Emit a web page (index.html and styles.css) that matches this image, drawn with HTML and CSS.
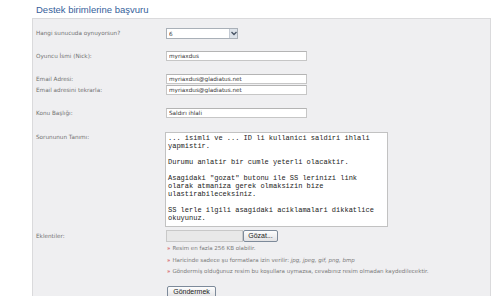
FILE: index.html
```html
<!DOCTYPE html>
<html lang="tr">
<head>
    <meta charset="UTF-8">
    <title>Destek birimlerine başvuru</title>
    <link rel="stylesheet" href="styles.css">
</head>
<body>
<h1 class="title">Destek birimlerine başvuru</h1>
<div class="panel">
    <div class="row r-server">
        <label class="lbl">Hangi sunucuda oynuyorsun?</label>
        <div class="select">
            <select><option>6</option></select>
            <span class="arrow"><svg width="6" height="5" viewBox="0 0 6 5"><path d="M0.5 1 L3 3.5 L5.5 1" fill="none" stroke="#4a5566" stroke-width="1.4"/></svg></span>
        </div>
    </div>
    <div class="row r-nick">
        <label class="lbl">Oyuncu İsmi (Nick):</label>
        <input class="txt" type="text" value="myriaxdus">
    </div>
    <div class="row r-mail">
        <label class="lbl">Email Adresi:</label>
        <input class="txt" type="text" value="myriaxdus@gladiatus.net">
    </div>
    <div class="row r-mail2">
        <label class="lbl">Email adresini tekrarla:</label>
        <input class="txt" type="text" value="myriaxdus@gladiatus.net">
    </div>
    <div class="row r-subject">
        <label class="lbl">Konu Başlığı:</label>
        <input class="txt" type="text" value="Saldırı ihlali">
    </div>
    <div class="row r-desc">
        <label class="lbl top">Sorununun Tanımı:</label>
        <textarea class="area">... isimli ve ... ID li kullanici saldiri ihlali
yapmistir.

Durumu anlatir bir cumle yeterli olacaktir.

Asagidaki "gozat" butonu ile SS lerinizi link
olarak atmaniza gerek olmaksizin bize
ulastirabileceksiniz.

SS lerle ilgili asagidaki aciklamalari dikkatlice
okuyunuz.</textarea>
    </div>
    <div class="row r-file">
        <label class="lbl">Eklentiler:</label>
        <div class="file">
            <span class="file-field"></span>
            <button class="btn browse" type="button">Gözat...</button>
        </div>
    </div>
    <ul class="notes">
        <li><span>»</span>Resim en fazla 256 KB olabilir.</li>
        <li><span>»</span>Haricinde sadece şu formatlara izin verilir: <em>jpg, jpeg, gif, png, bmp</em></li>
        <li><span>»</span>Göndermiş olduğunuz resim bu koşullara uymazsa, cevabınız resim olmadan kaydedilecektir.</li>
    </ul>
    <div class="submit">
        <button class="btn send" type="button">Göndermek</button>
    </div>
</div>
</body>
</html>
```

FILE: styles.css
```css
* {
    margin: 0;
    padding: 0;
    box-sizing: border-box;
}

html, body {
    height: 100%;
    overflow: hidden;
}

body {
    background: #fff;
    font-family: "DejaVu Sans", Verdana, sans-serif;
}

.title {
    height: 18px;
    padding: 4px 0 0 36px;
    font: normal 9.5px/11px "Liberation Sans", Arial, sans-serif;
    color: #36619b;
}

.panel {
    margin-left: 32px;
    width: 459px;
    height: calc(100% - 18px);
    padding-left: 3px;
    background: #efeff1;
    border: 1px solid #dadadc;
    border-bottom: 0;
}

.row {
    display: flex;
    align-items: center;
}

.lbl {
    width: 130px;
    flex: none;
    font-size: 5.7px;
    line-height: 7px;
    color: #727272;
}

.lbl.top {
    align-self: flex-start;
    padding-top: 2px;
}

.r-server { margin-top: 9px; }
.r-nick { margin-top: 12px; }
.r-mail { margin-top: 13px; }
.r-mail2 { margin-top: 1px; }
.r-subject { margin-top: 13px; }
.r-desc { margin-top: 14px; }
.r-file { margin-top: 3px; }

.select {
    display: flex;
    width: 72px;
    height: 11px;
    background: #fff;
    border: 1px solid #a9b0b8;
}

.select select {
    flex: 1;
    appearance: none;
    border: 0;
    outline: 0;
    background: transparent;
    padding-left: 2px;
    font: 5.7px "DejaVu Sans", Verdana, sans-serif;
    color: #333;
}

.arrow {
    display: flex;
    align-items: center;
    justify-content: center;
    width: 8px;
    background: #dde3ea;
    border-left: 1px solid #c3cad3;
}

.txt {
    width: 141px;
    height: 10px;
    padding: 0 2px;
    border: 1px solid #c6c6c6;
    border-top-color: #b4b4b4;
    background: #fff;
    font: 5.7px "DejaVu Sans", Verdana, sans-serif;
    color: #333;
    outline: 0;
}

.area {
    width: 223px;
    height: 95px;
    margin-left: -1px;
    padding: 1px 2px;
    border: 1px solid #c2c2c2;
    background: #fff;
    font: 7px/8px "Liberation Mono", "Courier New", monospace;
    color: #222;
    resize: none;
    overflow: hidden;
    outline: 0;
}

.file {
    display: flex;
    height: 12px;
}

.file-field {
    width: 77px;
    background: #e8e8e8;
    border: 1px solid #c8c8c8;
}

.btn {
    height: 12px;
    padding: 0 3px;
    border: 1px solid #7d8a9a;
    border-radius: 2px;
    background: linear-gradient(#fdfdfd, #e2e2e4);
    font: 7px/10px "Liberation Sans", Arial, sans-serif;
    color: #222;
}

.browse {
    width: 35px;
}

.send {
    width: 49px;
}

.notes {
    list-style: none;
    margin: 1px 0 0 131px;
    font-size: 5.5px;
    line-height: 11.5px;
    color: #7a7a7a;
}

.notes span {
    color: #d24545;
    margin-right: 2px;
}

.submit {
    margin: 1px 0 0 131px;
}
```
